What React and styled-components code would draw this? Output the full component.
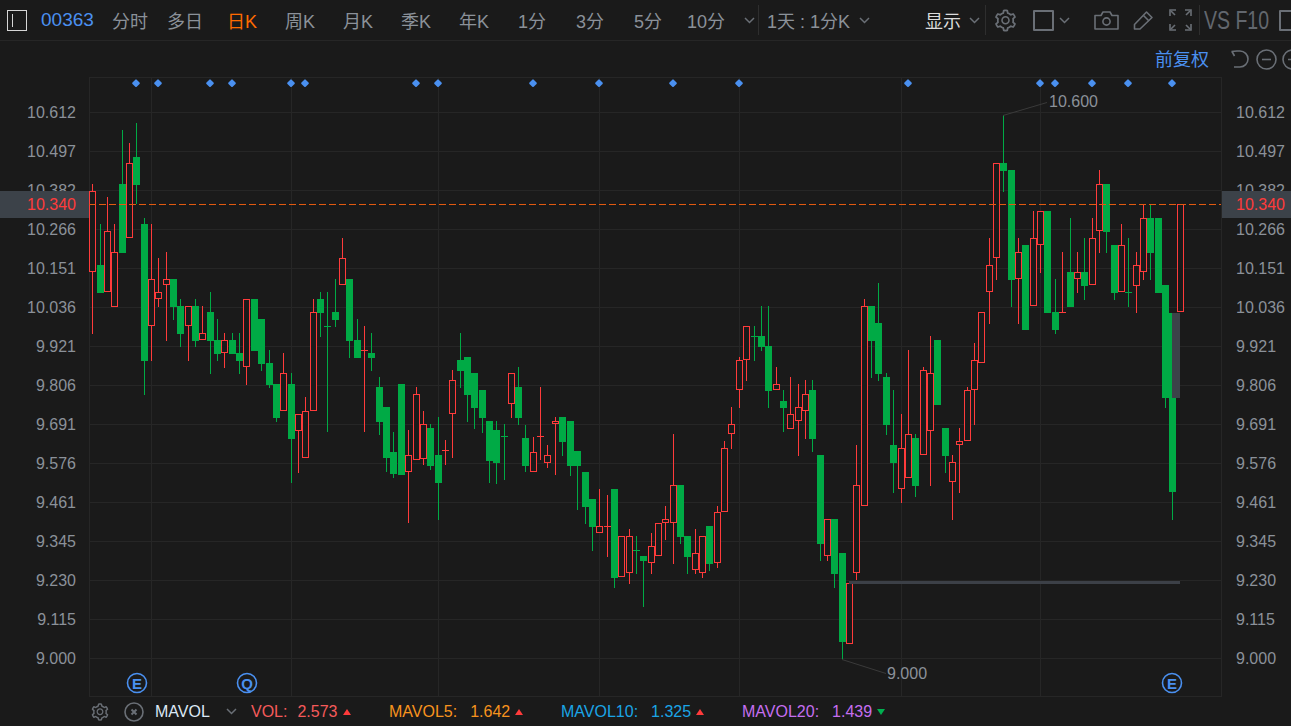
import styled, { createGlobalStyle } from "styled-components";
import { AiOutlineSetting } from "react-icons/ai";

const bg = "#1a1a1a";
const line = "#262626";
const grey = "#8b9199";
const iconGrey = "#6a6f76";
const blue = "#4a90f0";
const red = "#ff3b3b";
const green = "#00aa45";

const GlobalStyle = createGlobalStyle`
  html, body {
    margin: 0;
    padding: 0;
    background: ${bg};
    overflow: hidden;
  }
  body {
    font-family: "Liberation Sans", "Noto Sans CJK SC", sans-serif;
  }
`;

const Page = styled.div`
  width: 1291px;
  height: 726px;
  overflow: hidden;
  background: ${bg};
  color: ${grey};
`;
const Toolbar = styled.div`
  display: flex;
  align-items: center;
  height: 40px;
  border-bottom: 1px solid ${line};
  white-space: nowrap;
  & > * {
    flex: none;
  }
`;
const MenuBox = styled.div`
  box-sizing: border-box;
  width: 20px;
  height: 21px;
  margin-left: 7px;
  border: 1px solid #d6d6d6;
  padding: 3px 4px;
  &::before {
    content: "";
    display: block;
    width: 1px;
    height: 13px;
    background: #d6d6d6;
  }
`;
const Code = styled.div`
  width: 62px;
  margin-left: 14px;
  font-size: 19px;
  color: ${blue};
`;
const Tab = styled.div`
  width: ${(props) => props.$w || 58}px;
  text-align: center;
  font-size: 18px;
  color: ${(props) => (props.$active ? "#ff6a00" : grey)};
`;
const Divider = styled.div`
  width: 1px;
  height: 30px;
  margin-left: ${(props) => props.$ml}px;
  background: #2e2e2e;
`;
const Period = styled.div`
  margin-left: 8px;
  font-size: 18px;
`;
const Show = styled.div`
  margin-left: 55px;
  font-size: 18px;
  color: #dcdcdc;
`;
const Chevron = styled.svg`
  flex: none;
  width: 11px;
  height: 7px;
  margin-left: ${(props) => props.$ml}px;
  fill: none;
  stroke: ${iconGrey};
  stroke-width: 1.5;
`;
const ToolIcon = styled.svg`
  flex: none;
  margin-left: ${(props) => props.$ml}px;
  fill: none;
  stroke: ${iconGrey};
  stroke-width: 1.6;
`;
const Gear = styled(AiOutlineSetting)`
  flex: none;
  margin-left: ${(props) => props.$ml}px;
  color: ${iconGrey};
`;
const Square = styled.div`
  flex: none;
  box-sizing: border-box;
  width: 21px;
  height: 21px;
  margin-left: ${(props) => props.$ml}px;
  border: 2px solid ${iconGrey};
  border-radius: 1px;
`;
const VsText = styled.div`
  width: 66px;
  margin-left: 4px;
  font-size: 25px;
  color: #62676e;
  transform: scaleX(0.78);
  transform-origin: left center;
`;
const SubBar = styled.div`
  display: flex;
  align-items: center;
  justify-content: flex-end;
  height: 36px;
  margin-right: -12px;
`;
const Adjust = styled.div`
  margin: -2px 21px 0 0;
  font-size: 18px;
  color: ${blue};
`;
const ChartRow = styled.div`
  position: relative;
  display: grid;
  grid-template-columns: 89px 1133px 69px;
  height: 620px;
`;
const Axis = styled.div`
  padding: 17px 0 0 ${(props) => (props.$right ? 14 : 0)}px;
  padding-right: ${(props) => (props.$right ? 0 : 13)}px;
  text-align: ${(props) => (props.$right ? "left" : "right")};
`;
const Price = styled.div`
  height: 39px;
  line-height: 38px;
  font-size: 16px;
  color: ${grey};
`;
const Tag = styled.div`
  position: absolute;
  top: 114px;
  ${(props) => (props.$right ? "right: 0; text-align: left; padding-left: 14px; width: 55px;" : "left: 0; text-align: right; padding-right: 13px; width: 76px;")}
  height: 27px;
  line-height: 28px;
  background: #3c4249;
  color: ${red};
  font-size: 16px;
`;
const Plot = styled.svg`
  display: block;
  width: 1133px;
  height: 620px;
  text {
    font-family: "Liberation Sans", sans-serif;
    font-size: 16px;
    fill: ${grey};
  }
  .badge {
    fill: ${blue};
    font-size: 15px;
    font-weight: 700;
    text-anchor: middle;
  }
`;
const Footer = styled.div`
  display: flex;
  align-items: center;
  height: 29px;
  font-size: 16px;
  white-space: nowrap;
`;
const IndicatorName = styled.div`
  margin-left: 11px;
  width: 71px;
  color: #dce8f5;
`;
const Legend = styled.div`
  display: flex;
  align-items: center;
  flex: none;
  width: ${(props) => props.$w}px;
  margin-left: ${(props) => props.$ml || 0}px;
  color: ${(props) => props.$color};
`;
const LegendValue = styled.span`
  margin-left: ${(props) => props.$ml || 13}px;
`;
const Arrow = styled.span`
  margin-left: 5px;
  width: 0;
  height: 0;
  border-left: 4px solid transparent;
  border-right: 4px solid transparent;
  border-bottom: ${(props) => (props.$down ? "0" : "6px solid " + red)};
  border-top: ${(props) => (props.$down ? "6px solid #00b050" : "0")};
`;

const tabs = [
  ["分时", 54],
  ["多日", 56],
  ["日K", 58, true],
  ["周K"],
  ["月K"],
  ["季K"],
  ["年K"],
  ["1分"],
  ["3分"],
  ["5分"],
  ["10分"],
];
const prices = [
  "10.612", "10.497", "10.382", "10.266", "10.151", "10.036", "9.921", "9.806",
  "9.691", "9.576", "9.461", "9.345", "9.230", "9.115", "9.000",
];
const gridY = [112, 151, 190, 229, 268, 307, 346, 385, 424, 463, 502, 541, 580, 619, 658];
const gridX = [151, 291, 438, 599, 739, 901, 1040];
const markers = [136, 158, 210, 232, 291, 305, 416, 438, 533, 599, 673, 739, 908, 1040, 1055, 1092, 1128, 1172];

// x, high, body top, body bottom, low, kind
const candles = [
  [92, 184, 191, 272, 334, "r"], [100, 224, 265, 293, 293, "g"], [107, 197, 231, 292, 292, "r"],
  [114, 224, 252, 307, 307, "r"], [122, 130, 184, 253, 253, "g"], [129, 143, 163, 238, 238, "r"],
  [136, 123, 157, 185, 204, "g"], [144, 218, 224, 361, 395, "g"], [151, 224, 279, 326, 361, "r"],
  [158, 258, 292, 299, 307, "r"], [166, 252, 279, 285, 341, "r"], [173, 279, 279, 307, 320, "g"],
  [180, 299, 306, 334, 347, "g"], [188, 306, 306, 326, 361, "r"], [195, 299, 306, 341, 347, "g"],
  [202, 306, 333, 340, 340, "r"], [210, 292, 312, 341, 374, "g"], [217, 319, 340, 354, 361, "g"],
  [224, 333, 340, 353, 368, "r"], [232, 333, 340, 354, 354, "g"], [239, 333, 353, 361, 374, "g"],
  [246, 299, 299, 367, 385, "r"], [254, 299, 299, 351, 351, "g"], [261, 319, 319, 364, 371, "g"],
  [269, 350, 363, 385, 388, "g"], [276, 384, 384, 418, 422, "g"], [283, 353, 373, 411, 411, "r"],
  [291, 373, 384, 439, 483, "g"], [298, 414, 414, 431, 473, "r"], [305, 397, 411, 458, 458, "r"],
  [313, 299, 312, 411, 411, "r"], [320, 292, 299, 313, 337, "g"], [327, 292, 326, 326, 432, "g"],
  [335, 279, 312, 320, 327, "g"], [342, 238, 258, 285, 285, "r"], [349, 279, 279, 341, 358, "g"],
  [357, 319, 340, 358, 358, "g"], [364, 326, 350, 350, 432, "r"], [371, 333, 353, 358, 371, "g"],
  [379, 377, 387, 422, 435, "g"], [386, 407, 407, 458, 472, "g"], [393, 432, 452, 474, 478, "g"],
  [401, 384, 384, 475, 475, "g"], [408, 430, 455, 472, 523, "r"], [416, 387, 394, 460, 460, "r"],
  [423, 411, 424, 459, 465, "r"], [430, 424, 428, 466, 470, "g"], [438, 417, 455, 483, 520, "g"],
  [445, 440, 450, 450, 465, "r"], [452, 370, 380, 414, 458, "r"], [460, 333, 360, 371, 388, "g"],
  [467, 357, 357, 395, 422, "g"], [474, 373, 373, 408, 429, "g"], [482, 390, 390, 418, 433, "g"],
  [489, 421, 421, 461, 483, "g"], [496, 421, 430, 463, 484, "g"], [504, 424, 436, 436, 480, "g"],
  [511, 373, 373, 404, 418, "r"], [518, 367, 387, 418, 425, "g"], [525, 425, 438, 466, 472, "g"],
  [533, 437, 452, 472, 472, "r"], [540, 387, 436, 436, 460, "r"], [547, 445, 455, 463, 468, "r"],
  [555, 417, 421, 424, 475, "r"], [562, 417, 417, 442, 456, "g"], [570, 421, 421, 466, 476, "g"],
  [577, 451, 451, 466, 510, "g"], [585, 472, 472, 507, 524, "g"], [592, 499, 499, 527, 551, "g"],
  [599, 489, 526, 533, 533, "r"], [607, 495, 526, 526, 557, "r"], [614, 489, 489, 578, 588, "g"],
  [621, 536, 536, 577, 577, "r"], [629, 529, 536, 573, 584, "r"], [636, 536, 550, 550, 574, "g"],
  [643, 556, 556, 561, 607, "g"], [651, 533, 546, 563, 574, "r"], [658, 523, 523, 556, 556, "r"],
  [665, 506, 519, 523, 540, "r"], [673, 434, 485, 523, 564, "r"], [680, 485, 485, 537, 544, "g"],
  [687, 536, 536, 557, 574, "g"], [695, 529, 553, 570, 574, "r"], [702, 536, 536, 573, 578, "r"],
  [709, 526, 526, 564, 571, "g"], [717, 506, 512, 563, 568, "r"], [724, 441, 448, 512, 512, "r"],
  [731, 407, 424, 434, 449, "r"], [739, 357, 360, 390, 408, "r"], [746, 326, 326, 360, 381, "r"],
  [754, 326, 336, 336, 361, "g"], [761, 306, 336, 347, 351, "g"], [768, 306, 346, 391, 408, "g"],
  [776, 367, 384, 390, 390, "r"], [783, 390, 401, 408, 432, "g"], [790, 377, 414, 429, 429, "r"],
  [798, 384, 407, 421, 456, "r"], [805, 380, 394, 411, 439, "r"], [812, 380, 390, 439, 452, "g"],
  [820, 455, 455, 544, 561, "g"], [827, 519, 519, 556, 561, "r"], [834, 519, 519, 574, 588, "g"],
  [842, 553, 553, 642, 659, "g"], [849, 583, 583, 644, 644, "r"], [856, 445, 485, 573, 581, "r"],
  [864, 299, 306, 506, 506, "r"], [871, 306, 306, 341, 378, "g"], [878, 283, 323, 374, 381, "g"],
  [886, 373, 377, 425, 435, "g"], [893, 390, 445, 463, 493, "g"], [901, 414, 448, 489, 503, "r"],
  [908, 350, 434, 478, 478, "r"], [915, 434, 438, 486, 497, "g"], [923, 367, 370, 455, 455, "r"],
  [930, 336, 373, 431, 486, "r"], [937, 340, 340, 405, 405, "g"], [945, 428, 428, 456, 473, "g"],
  [952, 455, 462, 482, 520, "r"], [959, 428, 441, 445, 493, "r"], [967, 387, 390, 441, 441, "r"],
  [974, 343, 360, 390, 425, "r"], [981, 312, 312, 363, 363, "r"], [989, 238, 265, 292, 324, "r"],
  [996, 163, 163, 258, 280, "r"], [1003, 115, 163, 171, 192, "g"], [1011, 170, 170, 280, 307, "g"],
  [1018, 238, 252, 279, 324, "r"], [1025, 245, 245, 330, 330, "g"], [1033, 211, 238, 306, 306, "r"],
  [1040, 211, 211, 245, 273, "r"], [1047, 211, 211, 313, 313, "g"], [1055, 279, 312, 330, 334, "g"],
  [1062, 252, 312, 312, 312, "r"], [1070, 218, 272, 307, 307, "g"], [1077, 252, 272, 279, 293, "r"],
  [1084, 238, 272, 286, 300, "g"], [1092, 218, 238, 285, 285, "r"], [1099, 170, 184, 231, 253, "r"],
  [1106, 184, 184, 232, 253, "g"], [1114, 245, 245, 293, 300, "g"], [1121, 224, 245, 292, 292, "r"],
  [1128, 238, 292, 292, 307, "g"], [1136, 252, 265, 286, 313, "r"], [1143, 204, 218, 272, 280, "r"],
  [1150, 205, 218, 253, 280, "g"], [1158, 218, 218, 293, 293, "g"], [1165, 285, 285, 398, 408, "g"],
  [1172, 313, 313, 492, 520, "g"], [1180, 204, 204, 312, 312, "r"],
];

const Candle = ({ x, high, top, bottom, low, kind }) => {
  const color = kind === "r" ? red : green;
  const doji = top === bottom;
  return (
    <g>
      <rect x={x} y={high} width="1" height={low - high} fill={color} />
      {doji && <rect x={x - 3} y={top} width="7" height="1" fill={color} />}
      {!doji && kind === "g" && (
        <rect x={x - 3} y={top} width="7" height={bottom - top} fill={color} />
      )}
      {!doji && kind === "r" && (
        <rect
          x={x - 2.5}
          y={top + 0.5}
          width="6"
          height={bottom - top - 1}
          fill={bg}
          stroke={color}
          strokeWidth="1"
        />
      )}
    </g>
  );
};

const Badge = ({ x, label }) => (
  <g>
    <circle cx={x} cy="683" r="9.5" fill="none" stroke={blue} strokeWidth="1.6" />
    <text className="badge" x={x} y="688.5">{label}</text>
  </g>
);

const Down = ({ ml }) => (
  <Chevron $ml={ml} viewBox="0 0 11 7">
    <polyline points="1,1 5.5,5.5 10,1" />
  </Chevron>
);

const App = () => {
  return (
    <Page>
      <GlobalStyle />
      <Toolbar>
        <MenuBox />
        <Code>00363</Code>
        {tabs.map(([label, w, active]) => (
          <Tab key={label} $w={w} $active={active}>{label}</Tab>
        ))}
        <Down ml={9} />
        <Divider $ml={3} />
        <Period>1天 : 1分K</Period>
        <Down ml={9} />
        <Show>显示</Show>
        <Down ml={8} />
        <Divider $ml={5} />
        <Gear $ml={7} size={25} />
        <Square $ml={15} />
        <Down ml={5} />
        <ToolIcon $ml={24} width="25" height="19" viewBox="0 0 25 19">
          <path d="M1 4.5h6l2-3.5h7l2 3.5h6v13.5H1z" strokeLinejoin="round" />
          <circle cx="12.5" cy="10.5" r="3.6" />
        </ToolIcon>
        <ToolIcon $ml={14} width="21" height="20" viewBox="0 0 21 20">
          <path d="M1.5 14.5 13.5 2l5.5 5.5L7 19H1.5z" strokeLinejoin="round" />
          <path d="m10.5 5.5 5.5 5.5" />
        </ToolIcon>
        <ToolIcon $ml={15} width="23" height="22" viewBox="0 0 23 22">
          <path d="M1 7V1h6M16 1h6v6M22 15v6h-6M7 21H1v-6" />
          <path d="m2 2 4 4M21 2l-4 4M21 20l-4-4M2 20l4-4" />
        </ToolIcon>
        <Divider $ml={7} />
        <VsText>VS F10</VsText>
        <Square $ml={9} />
      </Toolbar>
      <SubBar>
        <Adjust>前复权</Adjust>
        <ToolIcon $ml={0} width="19" height="18" viewBox="0 0 19 18">
          <path d="M1.5 1.5 7 1H10a7.5 7.5 0 0 1 0 16H4" />
          <path d="M2 1.5 4.5 6" />
        </ToolIcon>
        <ToolIcon $ml={7} width="21" height="21" viewBox="0 0 21 21">
          <circle cx="10.5" cy="10.5" r="9.5" />
          <path d="M6 10.5h9" />
        </ToolIcon>
        <ToolIcon $ml={5} width="21" height="21" viewBox="0 0 21 21">
          <circle cx="10.5" cy="10.5" r="9.5" />
          <path d="M6 10.5h9M10.5 6v9" />
        </ToolIcon>
      </SubBar>
      <ChartRow>
        <Axis>
          {prices.map((p) => <Price key={p}>{p}</Price>)}
        </Axis>
        <Plot viewBox="89 77 1133 620">
          <g shapeRendering="crispEdges">
            {gridY.map((y) => (
              <rect key={y} x="89" y={y} width="1133" height="1" fill={line} />
            ))}
            {gridX.map((x) => (
              <rect key={x} x={x} y="77" width="1" height="620" fill={line} />
            ))}
            <rect x="89" y="77" width="1133" height="1" fill={line} />
            <rect x="89" y="696" width="1133" height="1" fill={line} />
            <rect x="89" y="77" width="1" height="620" fill={line} />
            <rect x="1221" y="77" width="1" height="620" fill={line} />
            {candles.map(([x, high, top, bottom, low, kind]) => (
              <Candle key={x} x={x} high={high} top={top} bottom={bottom} low={low} kind={kind} />
            ))}
            <rect x="1172" y="313" width="8" height="85" fill="#3c4249" />
            <rect x="849" y="580" width="331" height="1" fill="#222" />
            <rect x="849" y="581" width="331" height="3" fill="#3c4047" />
            <line x1="89" y1="204.5" x2="1221" y2="204.5" stroke="#e35a10" strokeWidth="1" strokeDasharray="7 3" />
          </g>
          {markers.map((x) => (
            <rect
              key={x}
              x={x - 3}
              y="80.2"
              width="6"
              height="6"
              rx="1"
              fill={blue}
              transform={`rotate(45 ${x} 83.2)`}
            />
          ))}
          <line x1="1003" y1="115.5" x2="1047" y2="102.5" stroke="#3a3a3a" />
          <text x="1049" y="107">10.600</text>
          <line x1="842" y1="659.5" x2="886" y2="673.5" stroke="#3a3a3a" />
          <text x="887" y="679">9.000</text>
          <Badge x={137} label="E" />
          <Badge x={247} label="Q" />
          <Badge x={1172} label="E" />
        </Plot>
        <Axis $right>
          {prices.map((p) => <Price key={p}>{p}</Price>)}
        </Axis>
        <Tag>10.340</Tag>
        <Tag $right>10.340</Tag>
      </ChartRow>
      <Footer>
        <Gear $ml={90} size={20} />
        <ToolIcon $ml={14} width="20" height="20" viewBox="0 0 20 20">
          <circle cx="10" cy="10" r="9" />
          <path d="m7.5 7.5 5 5M12.5 7.5l-5 5" strokeWidth="2" />
        </ToolIcon>
        <IndicatorName>MAVOL</IndicatorName>
        <Down ml={0} />
        <Legend $ml={14} $w={138} $color="#f55a5a">
          VOL:<LegendValue $ml={10}>2.573</LegendValue><Arrow />
        </Legend>
        <Legend $w={172} $color="#f7931e">
          MAVOL5:<LegendValue>1.642</LegendValue><Arrow />
        </Legend>
        <Legend $w={181} $color="#1aa5e6">
          MAVOL10:<LegendValue>1.325</LegendValue><Arrow />
        </Legend>
        <Legend $w={160} $color="#c56ef0">
          MAVOL20:<LegendValue>1.439</LegendValue><Arrow $down />
        </Legend>
      </Footer>
    </Page>
  );
};

export default App;
